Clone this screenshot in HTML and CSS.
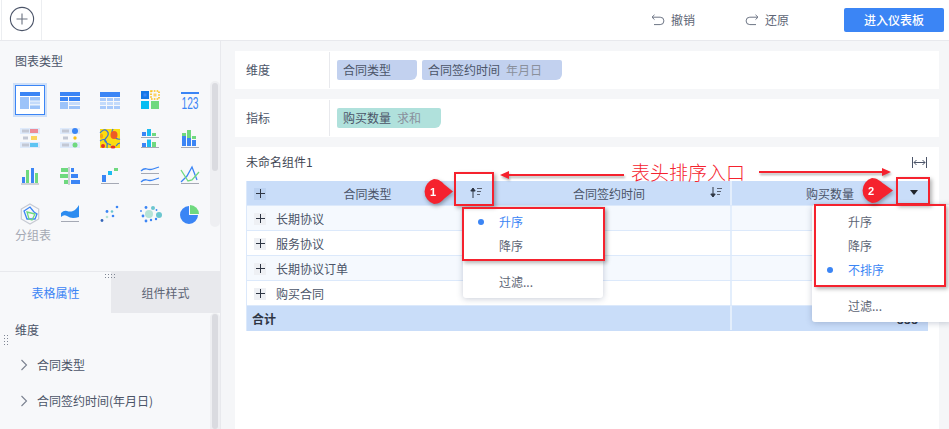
FILE: index.html
```html
<!DOCTYPE html>
<html lang="zh">
<head>
<meta charset="utf-8">
<title>表头排序</title>
<link rel="stylesheet" href="styles.css">
</head>
<body>
<div class="page">
  <header class="topbar">
    <div class="add-cell">
      <svg class="add-icon" width="26" height="26" viewBox="0 0 26 26"><circle cx="13" cy="13" r="11.6" fill="none" stroke="#4b5468" stroke-width="1.1"/><path d="M13 7.5v11M7.5 13h11" stroke="#6b7280" stroke-width="1.1"/></svg>
    </div>
    <div class="actions">
      <button class="tool"><svg width="14" height="12" viewBox="0 0 14 12"><path d="M3.5 .8 1 3.2l2.5 2.4M1.2 3.2h8a3.6 3.6 0 0 1 0 7.4H3" fill="none" stroke="#6d7585" stroke-width="1"/></svg>撤销</button>
      <button class="tool"><svg width="14" height="12" viewBox="0 0 14 12"><path d="M10.5 .8 13 3.2l-2.5 2.4M12.8 3.2h-8a3.6 3.6 0 0 0 0 7.4H11" fill="none" stroke="#6d7585" stroke-width="1"/></svg>还原</button>
      <button class="primary">进入仪表板</button>
    </div>
  </header>

  <div class="workspace">
    <aside class="side">
      <section class="types">
        <h2 class="side-title">图表类型</h2>
        <div class="icon-grid">
          <div class="cell selected"><svg viewBox="0 0 24 24"><rect x="2" y="4" width="20" height="4" fill="#3b85f5"/><rect x="2" y="9" width="9" height="12" fill="#9cc3f9"/><rect x="12" y="9" width="10" height="3.6" fill="#9cc3f9"/><rect x="12" y="13.4" width="10" height="3" fill="#c4dbfb"/><rect x="12" y="17.4" width="10" height="3.6" fill="#9cc3f9"/></svg></div>
          <div class="cell"><svg viewBox="0 0 24 24"><rect x="2" y="4" width="20" height="4" fill="#3b85f5"/><rect x="2" y="9" width="8" height="4" fill="#3b85f5"/><rect x="11" y="9" width="11" height="4" fill="#3b85f5"/><rect x="2" y="14" width="8" height="7" fill="#9cc3f9"/><rect x="11" y="14" width="11" height="3" fill="#c4dbfb"/><rect x="11" y="18" width="11" height="3" fill="#9cc3f9"/></svg></div>
          <div class="cell"><svg viewBox="0 0 24 24"><rect x="2" y="4" width="20" height="5" fill="#3b85f5"/><g fill="#a9cafa"><rect x="2" y="10" width="6" height="3"/><rect x="9" y="10" width="6" height="3"/><rect x="16" y="10" width="6" height="3"/><rect x="2" y="18" width="6" height="3"/><rect x="9" y="18" width="6" height="3"/><rect x="16" y="18" width="6" height="3"/></g><g fill="#c4dbfb"><rect x="2" y="14" width="6" height="3"/><rect x="9" y="14" width="6" height="3"/><rect x="16" y="14" width="6" height="3"/></g></svg></div>
          <div class="cell"><svg viewBox="0 0 24 24"><rect x="3" y="3" width="8" height="8" fill="#1277e6"/><rect x="5.5" y="5.5" width="3" height="3" fill="#3b85f5"/><rect x="13" y="3" width="8" height="8" fill="none" stroke="#fbbf15" stroke-width="1.6" stroke-dasharray="1.6 1.2"/><rect x="15.5" y="5.5" width="3" height="3" fill="#fcd469"/><rect x="3" y="13" width="8" height="8" fill="#06bdf2"/><rect x="13" y="13" width="8" height="8" fill="#6fd97f"/></svg></div>
          <div class="cell"><svg viewBox="0 0 24 24"><rect x="3" y="4" width="18" height="2" fill="#3b85f5"/><text x="12" y="21" class="num-icon" textLength="17" lengthAdjust="spacingAndGlyphs">123</text></svg></div>

          <div class="cell"><svg viewBox="0 0 24 24"><rect x="2" y="2" width="20" height="6" fill="#deeafb"/><rect x="2" y="16" width="20" height="6" fill="#deeafb"/><g fill="#c3c8d4"><rect x="4" y="3.500" width="7" height="3"/><rect x="5" y="10.500" width="5" height="3"/><rect x="4" y="17.500" width="7" height="3"/></g><rect x="12" y="3" width="8" height="4" fill="#ee8a98"/><rect x="13" y="10" width="6" height="4" fill="#fbd45f"/><rect x="12" y="17" width="8" height="4" fill="#5dc4f2"/></svg></div>
          <div class="cell"><svg viewBox="0 0 24 24"><rect x="2" y="2" width="20" height="6" fill="#deeafb"/><rect x="2" y="16" width="20" height="6" fill="#deeafb"/><g fill="#c3c8d4"><rect x="4" y="3.500" width="7" height="3"/><rect x="5" y="10.500" width="5" height="3"/><rect x="4" y="17.500" width="7" height="3"/></g><circle cx="17" cy="5" r="3" fill="#3b85f5"/><circle cx="17" cy="12" r="1.700" fill="#fbbf15"/><circle cx="17" cy="19" r="2.500" fill="#6fd97f"/></svg></div>
          <div class="cell"><svg viewBox="0 0 24 24"><rect x="2" y="3" width="20" height="19" fill="#fbdc10"/><path d="M2 7Q6 2 9 5T8 12t5 7M2 15q4-3 6 0t1 7M15 3q-3 5 1 8t6 2M18 20q2-3 4-3" fill="none" stroke="#3a74d0" stroke-width="1.2"/><ellipse cx="16" cy="9" rx="3.500" ry="4" fill="#ee5a24"/><ellipse cx="5" cy="20" rx="2" ry="2" fill="#e4312b"/><ellipse cx="15" cy="21" rx="2.500" ry="1.500" fill="#e4312b"/><ellipse cx="3.500" cy="10" rx="1.500" ry="2.500" fill="#f6a118"/></svg></div>
          <div class="cell"><svg viewBox="0 0 24 24"><rect x="4" y="6" width="4" height="4" fill="#3b85f5"/><rect x="9" y="3" width="4" height="7" fill="#1cbcf0"/><rect x="14" y="7" width="4" height="3" fill="#6fd97f"/><rect x="3" y="11" width="18" height="1" fill="#a5a9b4"/><rect x="4" y="17" width="4" height="4" fill="#3b85f5"/><rect x="9" y="13.500" width="4" height="7.500" fill="#1cbcf0"/><rect x="14" y="16" width="4" height="5" fill="#6fd97f"/><rect x="3" y="21" width="18" height="1" fill="#a5a9b4"/></svg></div>
          <div class="cell"><svg viewBox="0 0 24 24"><rect x="4" y="7" width="4" height="3" fill="#6fd97f"/><rect x="4" y="10" width="4" height="10" fill="#3b85f5"/><rect x="9" y="4" width="4" height="8" fill="#6fd97f"/><rect x="9" y="12" width="4" height="8" fill="#3b85f5"/><rect x="14" y="10" width="4" height="3" fill="#6fd97f"/><rect x="14" y="14" width="4" height="6" fill="#3b85f5"/><rect x="3" y="21" width="18" height="1" fill="#a5a9b4"/></svg></div>

          <div class="cell"><svg viewBox="0 0 24 24"><rect x="4" y="13" width="3" height="6" fill="#3b85f5"/><rect x="8" y="6" width="3" height="13" fill="#6fd97f"/><rect x="13" y="4" width="3" height="15" fill="#3b85f5"/><rect x="17" y="9" width="3" height="10" fill="#6fd97f"/><rect x="3" y="19.500" width="18" height="1" fill="#a5a9b4"/></svg></div>
          <div class="cell"><svg viewBox="0 0 24 24"><rect x="10.500" y="3" width="1" height="18" fill="#a5a9b4"/><g fill="#6fd97f"><rect x="3" y="4" width="7" height="4"/><rect x="2" y="10" width="8" height="4"/><rect x="6" y="16" width="4" height="4"/></g><g fill="#3b85f5"><rect x="13" y="4" width="3" height="4"/><rect x="13" y="10" width="7" height="4"/><rect x="13" y="16" width="9" height="4"/></g></svg></div>
          <div class="cell"><svg viewBox="0 0 24 24"><rect x="4" y="11" width="4" height="7" fill="#3b85f5"/><rect x="10" y="7" width="4" height="4" fill="#1cbcf0"/><rect x="16" y="4" width="4" height="3" fill="#6fd97f"/><rect x="3" y="19" width="18" height="1" fill="#a5a9b4"/></svg></div>
          <div class="cell"><svg viewBox="0 0 24 24"><path d="M3 7q3-3 6-2t6 0 6-2M3 18q3-3 6-2t6 0 6-2" fill="none" stroke="#3b85f5" stroke-width="1.300"/><rect x="3" y="9" width="18" height="1" fill="#a5a9b4"/><rect x="3" y="20" width="18" height="1" fill="#a5a9b4"/></svg></div>
          <div class="cell"><svg viewBox="0 0 24 24"><path d="M3 18 9 12l5-9 5 13" fill="none" stroke="#3b85f5" stroke-width="1.300"/><path d="M3 6l7 11 4-1 7-8" fill="none" stroke="#6fd97f" stroke-width="1.300"/><rect x="3" y="19" width="18" height="1" fill="#a5a9b4"/></svg></div>

          <div class="cell"><svg viewBox="0 0 24 24"><path d="M12 2l8.700 5v10L12 22l-8.700-5V7z" fill="none" stroke="#c6cad3" stroke-width="1.2"/><path d="M6 9l6-4 4 5 3 2-2 5-8 0z" fill="none" stroke="#3b85f5" stroke-width="1.300"/><path d="M9 10l8 2-3 6-3-1z" fill="none" stroke="#6fd97f" stroke-width="1.300"/></svg></div>
          <div class="cell"><svg viewBox="0 0 24 24"><path d="M3 11q3-3 6-2t6 0 6-6v12q-3 1-6 1t-6-2-6 1z" fill="#2c8cf0"/><rect x="3" y="19" width="18" height="1" fill="#a5a9b4"/></svg></div>
          <div class="cell"><svg viewBox="0 0 24 24"><circle cx="4" cy="18.500" r="1.400" fill="#3465b8"/><circle cx="9" cy="15" r="1.300" fill="#b5e3d6"/><circle cx="9" cy="9.500" r="1.400" fill="#3b85f5"/><circle cx="14" cy="9.500" r="1.300" fill="#6bc6cf"/><circle cx="15" cy="14" r="1.300" fill="#3b85f5"/><circle cx="19" cy="5" r="1.300" fill="#3b85f5"/></svg></div>
          <div class="cell"><svg viewBox="0 0 24 24"><circle cx="11" cy="12" r="4" fill="#b5e3d6"/><circle cx="15" cy="6" r="2" fill="#6bc6cf"/><circle cx="21" cy="13" r="3" fill="#6bc6cf"/><g fill="#3b85f5"><circle cx="8" cy="5.500" r="1.400"/><circle cx="3" cy="9" r=".9"/><circle cx="5" cy="14" r="1.400"/><circle cx="8" cy="19" r="1.400"/><circle cx="13" cy="18" r="1.200"/><circle cx="18" cy="17" r="1.200"/><circle cx="18.500" cy="8" r=".9"/></g></svg></div>
          <div class="cell"><svg viewBox="0 0 24 24"><path d="M11 4a9 9 0 1 0 9 9h-9z" fill="#3b85f5"/><path d="M12 3a9 9 0 0 1 9 9h-9z" fill="#6fd97f"/></svg></div>
        </div>
        <div class="group-label">分组表</div>
        <div class="scroll types-scroll"><i class="thumb types-thumb"></i></div>
      </section>
      <div class="splitter"><i class="grip"></i></div>
      <div class="tabs">
        <div class="tab active">表格属性</div>
        <div class="tab">组件样式</div>
      </div>
      <section class="props">
        <i class="side-grip"></i>
        <div class="prop-title">维度</div>
        <div class="prop-row"><svg width="8" height="12" viewBox="0 0 8 12"><path d="M1.500 1l5 5-5 5" fill="none" stroke="#7a8190" stroke-width="1.100"/></svg>合同类型</div>
        <div class="prop-row"><svg width="8" height="12" viewBox="0 0 8 12"><path d="M1.500 1l5 5-5 5" fill="none" stroke="#7a8190" stroke-width="1.100"/></svg>合同签约时间(年月日)</div>
        <div class="scroll props-scroll"><i class="thumb props-thumb"></i></div>
      </section>
    </aside>

    <main class="main">
      <div class="field card">
        <div class="field-name">维度</div>
        <div class="chips">
          <span class="chip dim chip-a">合同类型</span>
          <span class="chip dim chip-b">合同签约时间<em>年月日</em></span>
        </div>
      </div>
      <div class="field card">
        <div class="field-name">指标</div>
        <div class="chips">
          <span class="chip metric chip-c">购买数量<em>求和</em></span>
        </div>
      </div>
      <div class="widget card">
        <div class="widget-head">
          <span>未命名组件1</span>
          <svg class="fit-icon" width="15" height="11" viewBox="0 0 15 11"><path d="M.500 0v11M14.500 0v11M2 5.500h11M4.500 3 2 5.500 4.500 8M10.500 3 13 5.500 10.500 8" fill="none" stroke="#4b5468" stroke-width="1"/></svg>
        </div>
        <div class="table">
          <div class="row head">
            <div class="td c1"><i class="plus"></i><span class="center">合同类型</span><svg class="sort s1" width="12" height="11" viewBox="0 0 12 11"><path d="M3 11V1.500M.8 4 3 1l2.200 3z" stroke="#2f3644" fill="#2f3644" stroke-width="1"/><path d="M7 1.500h5M7 4.500h4M7 7.500h3" stroke="#5b6372" fill="none"/></svg></div>
            <div class="td c2"><span class="center">合同签约时间</span><svg class="sort s2" width="12" height="11" viewBox="0 0 12 11"><path d="M3 0v9.500M.8 7 3 10l2.200-3z" stroke="#2f3644" fill="#2f3644" stroke-width="1"/><path d="M7 1.500h5M7 4.500h4M7 7.500h3" stroke="#5b6372" fill="none"/></svg></div>
            <div class="td c3"><span class="center">购买数量</span></div>
          </div>
          <div class="row odd"><div class="td c1"><i class="plus"></i>长期协议</div><div class="td c2"></div><div class="td c3"></div></div>
          <div class="row"><div class="td c1"><i class="plus"></i>服务协议</div><div class="td c2"></div><div class="td c3"></div></div>
          <div class="row odd"><div class="td c1"><i class="plus"></i>长期协议订单</div><div class="td c2"></div><div class="td c3"></div></div>
          <div class="row"><div class="td c1"><i class="plus"></i>购买合同</div><div class="td c2"></div><div class="td c3"></div></div>
          <div class="row total"><div class="td c1">合计</div><div class="td c2"></div><div class="td c3 value">888</div></div>
        </div>
      </div>
    </main>
  </div>

  <div class="menu menu-one">
    <div class="item on">升序</div>
    <div class="item">降序</div>
    <div class="menu-gap"></div>
    <div class="item">过滤...</div>
  </div>
  <div class="menu menu-two">
    <div class="item">升序</div>
    <div class="item">降序</div>
    <div class="item on">不排序</div>
    <div class="menu-gap"></div>
    <div class="item">过滤...</div>
  </div>

  <svg class="caret" width="8" height="5" viewBox="0 0 8 5"><path d="M0 0h8L4 5z" fill="#20242c"/></svg>

  <div class="note note-head-one"></div>
  <div class="note note-menu-one"></div>
  <div class="note note-head-two"></div>
  <div class="note note-menu-two"></div>

  <svg class="arrow arrow-left" width="124" height="10" viewBox="0 0 124 10"><path d="M0 5l9-4v3h115v2H9v3z" fill="#f5222e"/></svg>
  <svg class="arrow arrow-right" width="132" height="10" viewBox="0 0 132 10"><path d="M132 5l-9-4v3H0v2h123v3z" fill="#f5222e"/></svg>
  <div class="note-text">表头排序入口</div>

  <svg class="badge badge-one" width="33" height="26" viewBox="0 0 33 26"><path d="M13 0c5 0 8 3 11 6l8 6.500-8 6.500c-3 3-6 6-11 6A13 13 0 0 1 13 0z" fill="#f5222e"/><text x="12" y="17" class="badge-num">1</text></svg>
  <svg class="badge badge-two" width="35" height="26" viewBox="0 0 35 26"><path d="M13 0c5 0 8 3 12 6l9 6.500-9 6.500c-4 3-7 6-12 6A13 13 0 0 1 13 0z" fill="#f5222e"/><text x="12" y="17" class="badge-num">2</text></svg>
</div>
</body>
</html>
```

FILE: styles.css
```css
* { box-sizing: border-box; }

html, body {
  margin: 0;
  height: 100%;
  overflow: hidden;
}

body {
  font-family: "Noto Sans CJK SC", "Liberation Sans", sans-serif;
  font-size: 12px;
  line-height: 16px;
  color: #4b5468;
}

.page {
  position: relative;
  width: 949px;
  height: 429px;
  overflow: hidden;
  display: flex;
  flex-direction: column;
  background: #f5f6f8;
}

/* top bar */
.topbar {
  flex: none;
  height: 41px;
  display: flex;
  align-items: stretch;
  background: #fff;
  border-bottom: 1px solid #e8e9ed;
}

.add-cell {
  width: 41px;
  margin-left: 1px;
  display: flex;
  align-items: center;
  justify-content: center;
  border-left: 1px solid #eceef1;
  border-right: 1px solid #eceef1;
}

.add-icon { margin-top: -2px; }

.actions {
  flex: 1;
  display: flex;
  align-items: center;
  justify-content: flex-end;
  padding: 0 5px 1px 0;
}

.tool {
  display: flex;
  align-items: center;
  gap: 6px;
  margin-right: 50px;
  padding: 0;
  border: 0;
  background: none;
  font: inherit;
  color: #5d6575;
}

.tool + .tool { margin-right: 55px; }

.primary {
  width: 100px;
  height: 24px;
  padding: 0;
  border: 0;
  border-radius: 2px;
  background: #3b85f5;
  color: #fff;
  font: inherit;
  font-weight: 500;
}

/* workspace */
.workspace {
  flex: 1;
  min-height: 0;
  display: flex;
}

.side {
  flex: none;
  width: 221px;
  display: flex;
  flex-direction: column;
  background: #f7f8fa;
  border-right: 1px solid #e8e9ed;
}

.types {
  position: relative;
  height: 230px;
  padding: 12px 0 0;
}

.side-title {
  margin: 0 0 16px 15px;
  font-size: 12px;
  font-weight: 400;
  line-height: 16px;
  color: #4b5468;
}

.icon-grid {
  display: grid;
  grid-template-columns: repeat(5, 40px);
  grid-auto-rows: 38px;
  padding-left: 10px;
  margin-top: -4px;
}

.cell {
  display: flex;
  align-items: center;
  justify-content: center;
}

.cell svg {
  width: 24px;
  height: 24px;
  overflow: visible;
}

.cell.selected svg {
  box-sizing: content-box;
  padding: 2px;
  background: #fff;
  border: 1px solid #3b85f5;
  box-shadow: 0 0 0 2px #cfe0f8;
}

.num-icon {
  font-family: "Liberation Sans", sans-serif;
  font-size: 16px;
  fill: #3b85f5;
  text-anchor: middle;
}

.group-label {
  margin: -6px 0 0 15px;
  color: #a5a9b4;
}

.scroll {
  position: absolute;
  right: 0;
  width: 10px;
  background: #eeeff2;
  border-radius: 5px;
}

.thumb {
  position: absolute;
  left: 2px;
  width: 6px;
  background: #dadbe0;
  border-radius: 3px;
}

.types-scroll { top: 40px; height: 146px; }
.types-thumb { top: 2px; height: 88px; }

.splitter {
  flex: none;
  position: relative;
  height: 1px;
  background: #e8e9ed;
}

.grip, .side-grip {
  position: absolute;
  background-image: radial-gradient(circle, #7f8694 0.8px, transparent 1px);
  background-size: 3px 3px;
}

.grip { left: 104px; top: 2px; width: 12px; height: 6px; z-index: 1; }

.tabs {
  flex: none;
  height: 41px;
  display: flex;
}

.tab {
  width: 111px;
  display: flex;
  align-items: center;
  justify-content: center;
  background: #e8e9ed;
  color: #5d6575;
}

.tab + .tab { width: 109px; }
.tab.active { background: #f7f8fa; color: #3b85f5; }

.props {
  position: relative;
  flex: 1;
  padding-top: 9px;
}

.side-grip { left: 3px; top: 21px; width: 6px; height: 12px; }

.prop-title { margin-left: 15px; }

.prop-row {
  display: flex;
  align-items: center;
  gap: 9px;
  height: 36px;
  padding-left: 20px;
}

.prop-row:nth-of-type(2) { margin-top: 9px; }

.props-scroll { top: 0; bottom: 0; border-radius: 5px 5px 0 0; }
.props-thumb { top: 1px; bottom: 0; }

/* main area */
.main {
  flex: 1;
  min-width: 0;
  display: flex;
  flex-direction: column;
  gap: 10px;
  padding: 10px 10px 0 14px;
}

.card { background: #fff; }

.field {
  flex: none;
  height: 38px;
  display: flex;
  align-items: center;
}

.field-name {
  width: 95px;
  height: 36px;
  padding-left: 11px;
  line-height: 36px;
  border-right: 1px solid #e8e9ed;
}

.chips {
  display: flex;
  gap: 5px;
  padding-left: 7px;
}

.chip {
  height: 20px;
  padding-left: 6px;
  line-height: 20px;
  border-radius: 2px 2px 6px 2px;
  color: #4b5468;
}

.chip em { margin-left: 6px; font-style: normal; color: #8a909c; }
.dim { background: #c2d1ef; }
.metric { background: #b0e1dc; }
.chip-a { width: 80px; }
.chip-b { width: 140px; }
.chip-c { width: 104px; }

.widget {
  flex: 1;
  padding: 0 11px;
}

.widget-head {
  height: 34px;
  display: flex;
  align-items: center;
  justify-content: space-between;
  padding: 0 1px 4px 0;
  color: #3f4654;
}

.table {
  width: 682px;
  border-left: 1px solid #dce9fb;
}

.row {
  height: 25px;
  display: grid;
  grid-template-columns: 241px 244px 196px;
  background: #fff;
  border-bottom: 1px solid #dce9fb;
}

.row.odd { background: #f5f9fe; }
.row.head, .row.total { background: #c9ddf9; border-bottom-color: #c9ddf9; }
.row.head { border-bottom-color: #dce9fb; }

.td {
  position: relative;
  display: flex;
  align-items: center;
  padding: 1px 0 0 7px;
  color: #4b5468;
}

.td.c2 { border-right: 2px solid #e3eefc; }

.plus {
  width: 12px;
  height: 12px;
  margin-right: 10px;
  background:
    linear-gradient(#2f3644, #2f3644) center / 9px 1px no-repeat,
    linear-gradient(#2f3644, #2f3644) center / 1px 9px no-repeat,
    #eef0f4;
}

.head .plus { background-color: #bcd2f1; }

.center {
  position: absolute;
  left: 0;
  right: 0;
  text-align: center;
}

.sort { position: absolute; top: 6px; }
.s1 { left: 223px; }
.s2 { right: 8px; }

.total .td { font-weight: 700; color: #2f3644; padding-left: 5px; }
.td.value { justify-content: flex-end; padding-right: 10px; }

/* menus and annotations lying over the page */
.menu {
  position: absolute;
  background: #fff;
  border-radius: 3px;
  box-shadow: 0 1px 6px rgba(40, 60, 100, .25);
  z-index: 2;
}

.menu-one { left: 463px; top: 207px; width: 140px; padding: 3px 0 4px; }
.menu-two { left: 812px; top: 205px; width: 140px; padding: 5px 0 4px; }

.item {
  position: relative;
  height: 24px;
  padding-left: 36px;
  line-height: 24px;
  color: #5d6575;
}

.item.on { color: #3b85f5; }

.item.on::before {
  content: "";
  position: absolute;
  left: 15px;
  top: 9px;
  width: 6px;
  height: 6px;
  border-radius: 50%;
  background: #3b85f5;
}

.menu-gap { height: 12px; }

.caret { position: absolute; left: 910px; top: 190px; z-index: 4; }

.note {
  position: absolute;
  border: 2px solid #f5222e;
  box-shadow: 2px 2px 4px rgba(0, 0, 0, .3);
  z-index: 3;
}

.note-head-one { left: 454px; top: 172px; width: 40px; height: 34px; }
.note-menu-one { left: 462px; top: 207px; width: 143px; height: 54px; }
.note-head-two { left: 896px; top: 177px; width: 34px; height: 28px; }
.note-menu-two { left: 814px; top: 204px; width: 132px; height: 83px; }

.arrow {
  position: absolute;
  filter: drop-shadow(1px 2px 1px rgba(0, 0, 0, .3));
  z-index: 3;
}

.arrow-left { left: 500px; top: 170px; }
.arrow-right { left: 759px; top: 167px; }

.note-text {
  position: absolute;
  left: 631px;
  top: 159px;
  font-size: 19px;
  font-weight: 300;
  line-height: 26px;
  color: #f5222e;
  z-index: 3;
}

.badge {
  position: absolute;
  filter: drop-shadow(1px 2px 2px rgba(0, 0, 0, .35));
  z-index: 3;
}

.badge-one { left: 421px; top: 179px; }
.badge-two { left: 859px; top: 178px; }

.badge-num {
  font-family: "Liberation Sans", sans-serif;
  font-size: 11px;
  font-weight: 700;
  fill: #fff;
  text-anchor: middle;
}
```
